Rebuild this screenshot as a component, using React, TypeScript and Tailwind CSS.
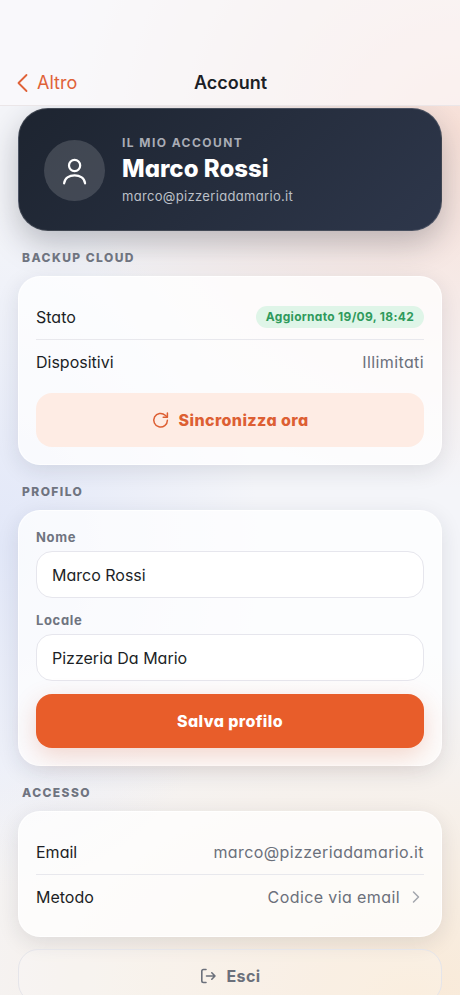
import { useState } from "react";
import type { ReactNode } from "react";

const EMAIL = "marco@pizzeriadamario.it";

function UserIcon() {
  return (
    <svg width="30" height="30" viewBox="0 0 30 30" fill="none" stroke="currentColor" strokeWidth="2.2" strokeLinecap="round" aria-hidden="true">
      <circle cx="14.6" cy="9.5" r="5.6" />
      <path d="M4.100 27.300C4.600 22.300 9.100 19.400 14.600 19.400S24.600 22.300 25.100 27.300" />
    </svg>
  );
}

function SyncIcon() {
  return (
    <svg width="18" height="18" viewBox="0 0 18 18" fill="none" stroke="currentColor" strokeWidth="1.5" strokeLinecap="round" strokeLinejoin="round" aria-hidden="true">
      <path d="M15.400 9.200A6.800 6.800 0 1 1 13.200 4.200l2 1.800" />
      <path d="M15.400 2v4.200h-4.200" />
    </svg>
  );
}

function LogoutIcon() {
  return (
    <svg width="18" height="18" viewBox="0 0 18 18" fill="none" stroke="currentColor" strokeWidth="1.6" strokeLinecap="round" strokeLinejoin="round" aria-hidden="true">
      <path d="M7 2.500H4.500A1.700 1.700 0 0 0 2.800 4.200v9.600A1.700 1.700 0 0 0 4.500 15.500H7" />
      <path d="M7.500 9H16M12.800 5.800 16 9l-3.200 3.200" />
    </svg>
  );
}

interface SectionProps {
  title: string;
  children: ReactNode;
}

function Section({ title, children }: SectionProps) {
  return (
    <section>
      <h2 className="px-1 pt-[18px] pb-[9px] text-xs leading-[18px] font-extrabold tracking-[0.12em] text-[#6f7480] uppercase">
        {title}
      </h2>
      <div className="rounded-[22px] border border-white/80 bg-white/75 p-[17px] shadow-[0_6px_22px_rgba(31,36,51,0.11)]">
        {children}
      </div>
    </section>
  );
}

interface RowProps {
  label: string;
  children: ReactNode;
}

function Row({ label, children }: RowProps) {
  return (
    <div className="flex h-[46px] items-center justify-between border-b border-[#e8e8ed] text-base last:h-11 last:border-b-0">
      <dt className="text-[#1c1f26]">{label}</dt>
      <dd className="flex items-center tracking-wide text-[#6b707b]">{children}</dd>
    </div>
  );
}

interface FieldProps {
  id: string;
  label: string;
  value: string;
  onChange: (value: string) => void;
}

function Field({ id, label, value, onChange }: FieldProps) {
  return (
    <div className="mb-[13px]">
      <label htmlFor={id} className="mb-[5px] block text-[13px] leading-[18px] font-bold tracking-wider text-[#6f7480]">
        {label}
      </label>
      <input
        id={id}
        type="text"
        value={value}
        onChange={(e) => onChange(e.target.value)}
        className="block h-[47px] w-full rounded-2xl border border-[#e6e6ed] bg-white px-[15px] text-base text-[#1c1f26] outline-none focus:border-[#e85d2a]"
      />
    </div>
  );
}

export default function App() {
  const [name, setName] = useState("Marco Rossi");
  const [venue, setVenue] = useState("Pizzeria Da Mario");

  return (
    <div className="flex h-screen flex-col overflow-hidden bg-[#f4f5f9] bg-[radial-gradient(ellipse_400px_360px_at_100%_13%,rgba(250,214,199,0.65),transparent),radial-gradient(ellipse_260px_340px_at_0%_55%,rgba(220,227,248,0.75),transparent),radial-gradient(ellipse_560px_340px_at_90%_100%,rgba(250,232,210,0.85),transparent)] font-['Inter',sans-serif] [font-feature-settings:'cv11']">
      <header className="z-10 grid shrink-0 grid-cols-3 items-center border-b border-[#ebe6e8] bg-[#fbfafc]/60 pr-4 pl-[17px] pt-[61px]">
        <a href="#altro" className="flex h-11 items-center gap-2 text-lg text-[#e06238]">
          <svg width="12" height="20" viewBox="0 0 12 20" fill="none" stroke="currentColor" strokeWidth="1.8" strokeLinecap="round" strokeLinejoin="round" aria-hidden="true">
            <path d="M9.500 2 1.500 10l8 8" />
          </svg>
          Altro
        </a>
        <h1 className="text-center text-lg font-semibold text-[#1c1f26]">Account</h1>
      </header>

      <main className="flex-1 overflow-y-auto px-[18px] pt-[2px] pb-8 [scrollbar-width:none]">
        <div className="flex items-center gap-[17px] rounded-[30px] border border-white/15 bg-linear-135 from-[#1d2430] to-[#2e374b] px-[25px] pt-[25px] pb-[23px] shadow-[0_12px_32px_rgba(31,36,51,0.28)]">
          <div className="flex size-[61px] shrink-0 items-center justify-center rounded-full bg-white/15 text-white">
            <UserIcon />
          </div>
          <div className="min-w-0">
            <p className="text-xs leading-[18px] font-bold tracking-[0.12em] text-[#a9acb5] uppercase">Il mio account</p>
            <p className="text-2xl leading-[34px] font-extrabold text-white">Marco Rossi</p>
            <p className="text-[13px] leading-[21px] tracking-wide text-[#bcc0c8]">{EMAIL}</p>
          </div>
        </div>

        <Section title="Backup cloud">
          <dl>
            <Row label="Stato">
              <span className="rounded-full bg-[#dff5e8] px-[10px] text-xs leading-[22px] font-bold tracking-wide text-[#2f9a5c]">
                Aggiornato 19/09, 18:42
              </span>
            </Row>
            <Row label="Dispositivi">Illimitati</Row>
          </dl>
          <button type="button" className="mt-[9px] flex h-[54px] w-full items-center justify-center gap-[9px] rounded-2xl bg-[#feece4] text-base font-extrabold tracking-wide text-[#dd5f33]">
            <SyncIcon />
            Sincronizza ora
          </button>
        </Section>

        <Section title="Profilo">
          <form onSubmit={(e) => e.preventDefault()}>
            <Field id="nome" label="Nome" value={name} onChange={setName} />
            <Field id="locale" label="Locale" value={venue} onChange={setVenue} />
            <button type="submit" className="h-[54px] w-full rounded-2xl bg-[#e85d2a] text-base font-extrabold tracking-wide text-white shadow-[0_8px_24px_rgba(210,80,40,0.22)]">
              Salva profilo
            </button>
          </form>
        </Section>

        <Section title="Accesso">
          <dl>
            <Row label="Email">{EMAIL}</Row>
            <Row label="Metodo">
              Codice via email
              <svg className="ml-2 text-[#a3a6ad]" width="16" height="16" viewBox="0 0 16 16" fill="none" stroke="currentColor" strokeWidth="1.5" strokeLinecap="round" strokeLinejoin="round" aria-hidden="true">
                <path d="m5.500 3 5 5-5 5" />
              </svg>
            </Row>
          </dl>
        </Section>

        <button type="button" className="mt-3 flex h-[54px] w-full items-center justify-center gap-[9px] rounded-[20px] border border-[#e5e5ea] bg-white/20 text-base font-bold tracking-wide text-[#6b707b]">
          <LogoutIcon />
          Esci
        </button>
      </main>
    </div>
  );
}
